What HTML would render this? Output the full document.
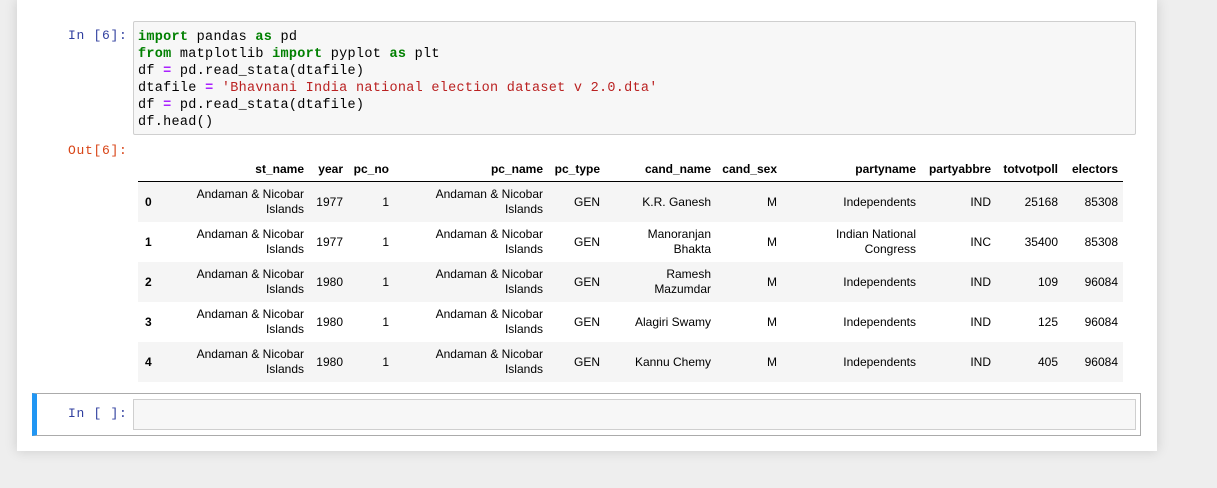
<!DOCTYPE html>
<html><head><style>
body{margin:0;background:#eeeeee;width:1217px;height:488px;overflow:hidden;position:relative;font-family:"Liberation Sans",sans-serif}
.panel{position:absolute;left:17px;top:0;width:1140px;height:451px;background:#fff;box-shadow:0 0 12px rgba(0,0,0,0.15)}
.prompt{position:absolute;font-family:"Liberation Mono",monospace;font-size:13px;color:#303f9f;letter-spacing:0.7px}
.code{position:absolute;left:133px;top:21px;width:1003px;height:114px;background:#f7f7f7;border:1px solid #cfcfcf;border-radius:2px;font-family:"Liberation Mono",monospace;font-size:13.5px;line-height:17px;padding:7px 0 0 4px;box-sizing:border-box;white-space:pre;color:#000;letter-spacing:0.28px}
.k{color:#008000;font-weight:bold}.o{color:#aa22ff;font-weight:bold}.s{color:#ba2121}
table{position:absolute;left:138px;top:156px;width:985px;border-collapse:collapse;table-layout:fixed;font-size:12px;color:#000}
th{font-weight:bold;text-align:right;padding:0 5px;height:25px;border-bottom:1px solid #000;vertical-align:middle}
td{text-align:right;padding:0 5px;height:40px;line-height:15px;vertical-align:middle}
td:first-child{text-align:left;font-weight:bold;padding-left:7px}
tbody tr:nth-child(odd){background:#f5f5f5}
.cell2{position:absolute;left:32px;top:393px;width:1109px;height:43px;border:1px solid #ababab;box-sizing:border-box;border-left:5px solid #2196f3}
.in2{position:absolute;left:133px;top:399px;width:1003px;height:31px;background:#f7f7f7;border:1px solid #cfcfcf;box-sizing:border-box}
</style></head><body>
<div class="panel"></div>
<div class="prompt" style="left:68px;top:28px">In [6]:</div>
<div class="code"><span class="k">import</span> pandas <span class="k">as</span> pd
<span class="k">from</span> matplotlib <span class="k">import</span> pyplot <span class="k">as</span> plt
df <span class="o">=</span> pd.read_stata(dtafile)
dtafile <span class="o">=</span> <span class="s">'Bhavnani India national election dataset v 2.0.dta'</span>
df <span class="o">=</span> pd.read_stata(dtafile)
df.head()</div>
<div class="prompt" style="left:68px;top:143px;color:#d84315">Out[6]:</div>
<table>
<colgroup><col style="width:52px"><col style="width:119px"><col style="width:39px"><col style="width:46px"><col style="width:154px"><col style="width:57px"><col style="width:111px"><col style="width:66px"><col style="width:139px"><col style="width:75px"><col style="width:67px"><col style="width:60px"></colgroup>
<thead><tr><th></th><th>st_name</th><th>year</th><th>pc_no</th><th>pc_name</th><th>pc_type</th><th>cand_name</th><th>cand_sex</th><th>partyname</th><th>partyabbre</th><th>totvotpoll</th><th>electors</th></tr></thead>
<tbody>
<tr><td>0</td><td>Andaman &amp; Nicobar Islands</td><td>1977</td><td>1</td><td>Andaman &amp; Nicobar Islands</td><td>GEN</td><td>K.R. Ganesh</td><td>M</td><td>Independents</td><td>IND</td><td>25168</td><td>85308</td></tr>
<tr><td>1</td><td>Andaman &amp; Nicobar Islands</td><td>1977</td><td>1</td><td>Andaman &amp; Nicobar Islands</td><td>GEN</td><td>Manoranjan<br>Bhakta</td><td>M</td><td>Indian National<br>Congress</td><td>INC</td><td>35400</td><td>85308</td></tr>
<tr><td>2</td><td>Andaman &amp; Nicobar Islands</td><td>1980</td><td>1</td><td>Andaman &amp; Nicobar Islands</td><td>GEN</td><td>Ramesh<br>Mazumdar</td><td>M</td><td>Independents</td><td>IND</td><td>109</td><td>96084</td></tr>
<tr><td>3</td><td>Andaman &amp; Nicobar Islands</td><td>1980</td><td>1</td><td>Andaman &amp; Nicobar Islands</td><td>GEN</td><td>Alagiri Swamy</td><td>M</td><td>Independents</td><td>IND</td><td>125</td><td>96084</td></tr>
<tr><td>4</td><td>Andaman &amp; Nicobar Islands</td><td>1980</td><td>1</td><td>Andaman &amp; Nicobar Islands</td><td>GEN</td><td>Kannu Chemy</td><td>M</td><td>Independents</td><td>IND</td><td>405</td><td>96084</td></tr>
</tbody></table>
<div class="cell2"></div>
<div class="in2"></div>
<div class="prompt" style="left:68px;top:406px">In [ ]:</div>
</body></html>
